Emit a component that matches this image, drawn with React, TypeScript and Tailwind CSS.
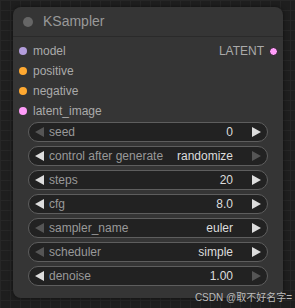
const inputs = [
  { name: "model", color: "bg-[#b39ddb]" },
  { name: "positive", color: "bg-[#ffa931]" },
  { name: "negative", color: "bg-[#ffa931]" },
  { name: "latent_image", color: "bg-[#ff9cf9]" },
];

const widgets = [
  { label: "seed", value: "0", left: false, right: true },
  { label: "control after generate", value: "randomize", left: true, right: false },
  { label: "steps", value: "20", left: true, right: true },
  { label: "cfg", value: "8.0", left: true, right: true },
  { label: "sampler_name", value: "euler", left: false, right: true },
  { label: "scheduler", value: "simple", left: false, right: true },
  { label: "denoise", value: "1.00", left: true, right: false },
];

function Arrow({ dir, on }: { dir: "left" | "right"; on: boolean }) {
  return (
    <svg width="9" height="10" viewBox="0 0 9 10" className="shrink-0">
      <polygon
        points={dir === "left" ? "0,5 9,0 9,10" : "0,0 9,5 0,10"}
        fill={on ? "#dddddd" : "#555555"}
      />
    </svg>
  );
}

export default function App() {
  return (
    <div className="relative w-[295px] h-[308px] overflow-hidden bg-[#1e1e1e] bg-[linear-gradient(#262626_1px,transparent_1px),linear-gradient(90deg,#262626_1px,transparent_1px)] bg-[size:10px_10px] font-['Liberation_Sans',Arial,sans-serif] pt-[7px] pl-[13px]">
      <div className="w-[270px] h-[291px] rounded-[8px] bg-[#353535] shadow-[0_0_4px_rgba(0,0,0,0.5)]">
        <div className="h-[30px] flex items-center border-b border-[#2a2a2a] pl-[10px]">
          <span className="w-[10px] h-[10px] rounded-full bg-[#666]" />
          <span className="ml-[10px] text-[14px] text-[#999]">KSampler</span>
        </div>
        <div className="pt-[4px]">
          {inputs.map((inp, i) => (
            <div key={inp.name} className="h-[20px] flex items-center pl-[6px] pr-[5px] text-[12px] text-[#aaa]">
              <span className={`w-[8px] h-[8px] rounded-full ${inp.color}`} />
              <span className="ml-[6px] flex-1">{inp.name}</span>
              {i === 0 && (
                <>
                  <span>LATENT</span>
                  <span className="ml-[5px] w-[9px] h-[9px] rounded-full bg-[#ff9cf9] border border-[#1a1a1a]" />
                </>
              )}
            </div>
          ))}
        </div>
        <div className="mt-[1px] flex flex-col gap-[4px] px-[15px]">
          {widgets.map((w) => (
            <div
              key={w.label}
              className="h-[20px] flex items-center rounded-full border border-[#5e5e5e] bg-[#222] pl-[6px] pr-[6px] text-[12px]"
            >
              <Arrow dir="left" on={w.left} />
              <span className="ml-[5px] text-[#999]">{w.label}</span>
              <span className="flex-1 text-right text-[#ddd]">{w.value}</span>
              <span className="ml-[19px]">
                <Arrow dir="right" on={w.right} />
              </span>
            </div>
          ))}
        </div>
      </div>
      <span className="absolute right-[3px] top-[291px] whitespace-nowrap text-[10px] leading-[13px] text-[#bbb] font-['Liberation_Sans','Noto_Sans_CJK_SC',sans-serif]">
        CSDN @取不好名字=
      </span>
    </div>
  );
}
